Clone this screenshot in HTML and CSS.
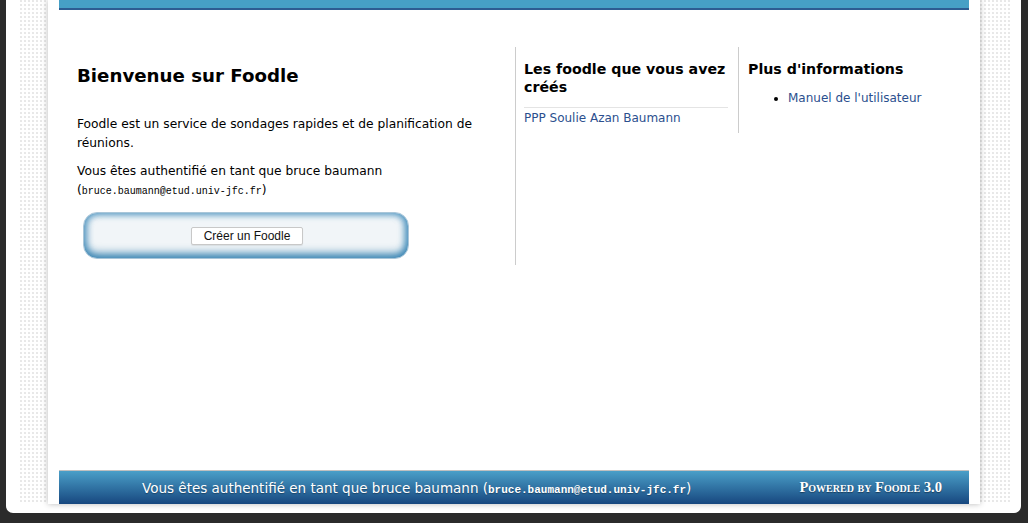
FILE: index.html
```html
<!DOCTYPE html>
<html lang="fr">
<head>
<meta charset="utf-8">
<title>Foodle</title>
<link rel="stylesheet" href="styles.css">
</head>
<body>
<div class="frame">
  <div class="dots">
    <div class="page">
      <div class="topbar"></div>
      <div class="columns">
        <div class="col col-main">
          <h1>Bienvenue sur Foodle</h1>
          <p>Foodle est un service de sondages rapides et de planification de réunions.</p>
          <p class="auth">Vous êtes authentifié en tant que bruce baumann <span class="mail">(<code>bruce.baumann@etud.univ-jfc.fr</code>)</span></p>
          <div class="actionbox">
            <button class="btn" type="button">Créer un Foodle</button>
          </div>
        </div>
        <div class="col col-created">
          <h2>Les foodle que vous avez créés</h2>
          <div class="sep"></div>
          <a class="link" href="#">PPP Soulie Azan Baumann</a>
        </div>
        <div class="col col-info">
          <h2>Plus d'informations</h2>
          <ul>
            <li><a class="link" href="#">Manuel de l'utilisateur</a></li>
          </ul>
        </div>
      </div>
      <div class="spacer"></div>
      <div class="footer">
        <span class="foot-auth">Vous êtes authentifié en tant que bruce baumann (<code>bruce.baumann@etud.univ-jfc.fr</code>)</span>
        <span class="powered">Powered by Foodle 3.0</span>
      </div>
    </div>
  </div>
</div>
</body>
</html>
```

FILE: styles.css
```css
html, body {
  margin: 0;
  padding: 0;
  background: #2b2b2b;
  height: 523px;
  overflow: hidden;
}
.frame {
  margin: 0 7px 0 6px;
  height: 513px;
  background: #ffffff;
  border-radius: 0 0 7px 7px;
  padding: 0 11px 0 14px;
  box-sizing: border-box;
}
.dots {
  height: 504px;
  background-color: #fff;
  background-image: radial-gradient(circle at 1px 1px, #dcdcdc 0.6px, transparent 0.9px);
  background-size: 4px 4px;
  padding-left: 28px;
}
.page {
  width: 932px;
  height: 504px;
  background: #fff;
  box-shadow: 0 0 6px rgba(0,0,0,0.28);
  padding: 0 11px;
  box-sizing: border-box;
  display: flex;
  flex-direction: column;
  font-family: "DejaVu Sans", Verdana, sans-serif;
  color: #000;
}
.topbar {
  height: 8px;
  background: #46a0c6;
  border-bottom: 2px solid #2d5c92;
  flex: none;
}
.columns {
  display: flex;
  margin-top: 37px;
  align-items: flex-start;
}
.col-main {
  width: 456px;
  padding-left: 18px;
  box-sizing: border-box;
}
h1 {
  font-size: 18.2px;
  font-weight: bold;
  margin: 18px 0 0;
  line-height: 22px;
}
.col-main p {
  font-size: 12.25px;
  line-height: 19px;
  margin: 28px 30px 0 0;
}
.col-main p.auth {
  margin-top: 9px;
}
.mail {
  white-space: nowrap;
}
.mail code {
  font-family: "Liberation Mono", "Courier New", monospace;
  font-size: 10px;
}
.actionbox {
  margin: 11px 0 0 6px;
  width: 326px;
  height: 47px;
  border-radius: 14px;
  box-sizing: border-box;
  display: flex;
  align-items: center;
  justify-content: center;
  background: #f1f5f8;
  box-shadow: inset 0 -5px 8px rgba(40,120,170,0.75), inset 0 3px 6px rgba(60,140,190,0.35), inset 4px 0 6px rgba(60,140,190,0.4), inset -4px 0 6px rgba(60,140,190,0.55);
  border: 1px solid #a9c6d9;
}
.btn {
  font-family: "Liberation Sans", Arial, sans-serif;
  font-size: 12px;
  color: #111;
  background: #fff;
  border: 1px solid #c8c8c8;
  border-radius: 2px;
  width: 112px;
  height: 18px;
  padding: 0;
  margin: 1px 0 0 2px;
  box-shadow: 0 1px 1px rgba(0,0,0,0.08);
}
.col-created {
  border-left: 1px solid #cccccc;
  width: 223px;
  padding: 0 4px 0 8px;
  box-sizing: border-box;
  height: 218px;
}
.col-info {
  border-left: 1px solid #cccccc;
  padding-left: 9px;
  height: 86px;
  box-sizing: border-box;
  flex: 1;
}
h2 {
  font-size: 14.2px;
  font-weight: bold;
  line-height: 18px;
  margin: 13px 0 0;
}
.sep {
  border-top: 1px solid #e4e4e4;
  margin: 11px 6px 0 0;
}
.link {
  color: #2b4f8e;
  text-decoration: none;
  font-size: 12px;
  line-height: 18px;
}
.col-created .link {
  display: block;
  margin-top: 1px;
}
ul {
  margin: 11px 0 0;
  padding-left: 40px;
  font-size: 12px;
  line-height: 18px;
}
.spacer {
  flex: 1;
}
.footer {
  height: 34px;
  flex: none;
  border-top: 1px solid #c0c0c0;
  box-sizing: border-box;
  background: linear-gradient(#4a9fc8, #17477f);
  display: flex;
  align-items: center;
  color: #fff;
}
.foot-auth {
  margin-left: 83px;
  font-size: 13.5px;
  text-shadow: 0 1px 1px rgba(0,0,0,0.3);
}
.foot-auth code {
  font-family: "Liberation Mono", "Courier New", monospace;
  font-weight: bold;
  font-size: 11px;
}
.powered {
  margin-left: auto;
  margin-right: 27px;
  font-family: "Liberation Serif", "Times New Roman", serif;
  font-weight: bold;
  font-variant: small-caps;
  font-size: 14.6px;
  text-shadow: 0 1px 1px rgba(0,0,0,0.4);
}
```
